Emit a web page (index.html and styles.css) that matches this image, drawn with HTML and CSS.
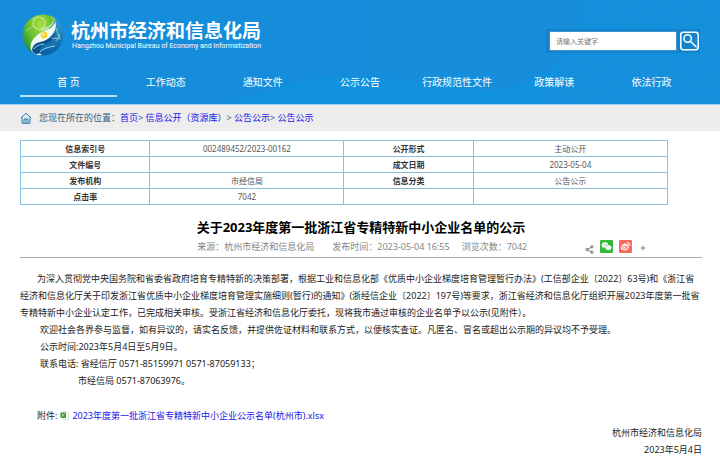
FILE: index.html
```html
<!DOCTYPE html>
<html lang="zh-CN">
<head>
<meta charset="utf-8">
<meta name="viewport" content="width=device-width, initial-scale=1">
<title>杭州市经济和信息化局</title>
<link rel="stylesheet" href="styles.css">
</head>
<body>
<header class="site-header">
  <svg class="waves" viewBox="0 0 720 104" preserveAspectRatio="none" aria-hidden="true">
    <defs>
      <pattern id="lines" width="4" height="4" patternUnits="userSpaceOnUse" patternTransform="rotate(20)">
        <path d="M0 0V4" stroke="#3aa5e8" stroke-width="1" opacity=".16"/>
      </pattern>
    </defs>
    <path d="M230 104Q290 74 360 76Q440 82 490 91Q540 88 570 54Q582 20 586 0H720V104Z" fill="#0c98e4" opacity=".15"/>
    <path d="M360 34Q372 16 374 0H586Q578 40 555 66Q525 88 490 91Q430 82 360 76Z" fill="url(#lines)"/>
    <path d="M230 104Q300 78 360 76Q430 82 490 91Q535 88 566 54L540 104Z" fill="#0d9be8" opacity=".3"/>
    <path d="M566 54Q560 78 540 104H720V0H586Q582 28 566 54Z" fill="url(#lines)"/>
  </svg>
  <div class="brand-row">
    <a class="brand" href="#">
      <svg class="emblem" viewBox="0 0 42 42" aria-hidden="true">
        <defs>
          <radialGradient id="green" cx=".55" cy=".25" r=".8">
            <stop offset="0" stop-color="#a9dd3e"/><stop offset=".5" stop-color="#62bd2d"/><stop offset="1" stop-color="#11804a"/>
          </radialGradient>
          <linearGradient id="blue" x1="0" y1="0" x2="0" y2="1">
            <stop offset="0" stop-color="#3ba6dc"/><stop offset="1" stop-color="#075d9f"/>
          </linearGradient>
          <clipPath id="disc"><circle cx="21" cy="21" r="20.5"/></clipPath>
        </defs>
        <g clip-path="url(#disc)">
          <path d="M0 0H42V42H0Z" fill="url(#blue)"/>
          <path d="M0 0H33Q35 12 20 18Q8 24 9 38L0 42Z" fill="url(#green)"/>
          <path d="M28 1Q38 6 29 14Q19 17 13 23Q7 29 9 36Q13 43 20 41Q12 36 17 30Q29 25 33 16Q36 6 28 1Z" fill="#f4fbef"/>
          <path d="M28 2Q34 7 27 12Q20 14 16 17Q28 16 31 10Q33 5 28 2Z" fill="#c5e8a0"/>
          <path d="M10 36Q11 29 18 28Q28 26 34 18Q32 27 24 30Q17 31 18 39Q12 42 10 36Z" fill="#0a538e"/>
          <path d="M12 35Q14 31 22 30M18 38Q20 34 33 32" fill="none" stroke="#94d5ef" stroke-width="1"/>
          <circle cx="17" cy="9" r="6" fill="none" stroke="#d3efa2" stroke-width="1.2" opacity=".8"/>
          <path d="M4 17L11 12M20 14L24 17M10 4L13 6M29 24L38 25L34 14M34 27L38 20" fill="none" stroke="#b5e8cc" stroke-width=".8" opacity=".8"/>
          <circle cx="22" cy="21" r="3.4" fill="#f6d536"/>
          <circle cx="21" cy="20" r="1.4" fill="#fff4a2"/>
        </g>
      </svg>
      <span class="brand-text">
        <strong class="brand-name">杭州市经济和信息化局</strong>
        <span class="brand-sub">Hangzhou Municipal Bureau of Economy and Informatization</span>
      </span>
    </a>
    <form class="search">
      <input class="search-box" type="text" placeholder="请输入关键字" aria-label="请输入关键字">
      <button class="search-button" type="button" aria-label="搜索">
        <svg viewBox="0 0 19 19" aria-hidden="true"><rect x=".8" y=".8" width="17.4" height="17.4" rx="2.4"/><circle cx="7.6" cy="7" r="3.7"/><path d="M10.4 9.8L16.6 15.8"/></svg>
      </button>
    </form>
  </div>
  <nav class="main-nav">
    <a class="active" href="#">首 页</a>
    <a href="#">工作动态</a>
    <a href="#">通知文件</a>
    <a href="#">公示公告</a>
    <a href="#">行政规范性文件</a>
    <a href="#">政策解读</a>
    <a href="#">依法行政</a>
  </nav>
</header>

<nav class="crumbs">
  <svg class="home" viewBox="0 0 12 12" aria-hidden="true"><path d="M.8 6L6 1.2L11.2 6M2 5V11.3H10V5M4 11V7H8V11M6 7V11"/></svg>
  <span>您现在所在的位置：<a href="#">首页</a>&gt; <a href="#">信息公开（资源库）</a>&gt; <a href="#">公告公示</a>&gt; <a href="#">公告公示</a></span>
</nav>

<main class="page">
  <table class="facts">
    <tbody>
      <tr><th scope="row">信息索引号</th><td>002489452/2023-00162</td><th scope="row">公开形式</th><td>主动公开</td></tr>
      <tr><th scope="row">文件编号</th><td></td><th scope="row">成文日期</th><td>2023-05-04</td></tr>
      <tr><th scope="row">发布机构</th><td>市经信局</td><th scope="row">信息分类</th><td>公告公示</td></tr>
      <tr><th scope="row">点击率</th><td>7042</td><td></td><td></td></tr>
    </tbody>
  </table>

  <article>
    <h1 class="title">关于2023年度第一批浙江省专精特新中小企业名单的公示</h1>
    <div class="meta">
      <span class="source">来源：杭州市经济和信息化局</span>
      <span class="time">发布时间：2023-05-04 16:55</span>
      <span class="views">浏览次数：7042</span>
      <div class="share">
        <svg class="share-mark" viewBox="0 0 9 9" aria-hidden="true"><path d="M2 4.5L6.8 2M2 4.5L6.8 7.2"/><circle cx="1.8" cy="4.5" r="1.2"/><circle cx="7" cy="1.8" r="1.2"/><circle cx="7" cy="7.2" r="1.2"/></svg>
        <button type="button" class="share-button wechat" aria-label="微信">
          <svg viewBox="0 0 13 13" aria-hidden="true">
            <path fill="#fff" d="M5 2.2C3 2.2 1.6 3.4 1.6 5c0 .9.4 1.6 1.1 2.1L2.4 8.3l1.3-.7 1.3.2C7 7.800 8.400 6.500 8.400 5S7 2.200 5 2.200Z"/>
            <path fill="#fff" stroke="#35b93c" stroke-width=".5" d="M8.400 4.900C6.500 4.900 5.100 6.100 5.100 7.600S6.500 10.300 8.400 10.300l1.100-.2 1.300.7-.3-1.200c.8-.5 1.200-1.200 1.200-2C11.700 6.100 10.300 4.900 8.400 4.900Z"/>
            <g fill="#35b93c"><circle cx="3.900" cy="4.300" r=".5"/><circle cx="6.100" cy="4.300" r=".5"/><circle cx="7.400" cy="6.900" r=".4"/><circle cx="9.400" cy="6.900" r=".4"/></g>
          </svg>
        </button>
        <button type="button" class="share-button weibo" aria-label="微博">
          <svg viewBox="0 0 13 13" aria-hidden="true">
            <path fill="#fff" d="M5.600 3.500C6.700 3 7.200 3.700 6.900 4.700C8.200 4.200 9 4.600 8.700 5.700C9.800 6.100 10 6.900 9.500 7.900C8.700 9.700 6.500 10.400 4.500 10.100C2.600 9.800 1.600 8.800 1.900 7.400C2.200 5.800 4.200 4.100 5.600 3.500Z"/>
            <ellipse cx="5.700" cy="7.500" rx="2.700" ry="1.800" fill="#f56b5d"/><circle cx="5.300" cy="7.600" r="1.200" fill="#fff"/>
            <path fill="none" stroke="#fff" stroke-width=".8" stroke-linecap="round" d="M8 2.400Q11.500 2 11.100 5.600M8.200 3.900Q9.900 3.700 9.700 5.300"/>
          </svg>
        </button>
        <button type="button" class="more" aria-label="更多分享"><svg viewBox="0 0 6 6" aria-hidden="true"><path d="M3 .5V5.500M.5 3H5.500"/></svg></button>
      </div>
    </div>

    <div class="body">
      <p class="lead">为深入贯彻党中央国务院和省委省政府培育专精特新的决策部署，根据工业和信息化部《优质中小企业梯度培育管理暂行办法》(工信部企业〔2022〕63号)和《浙江省经济和信息化厅关于印发浙江省优质中小企业梯度培育管理实施细则(暂行)的通知》(浙经信企业〔2022〕197号)等要求，浙江省经济和信息化厅组织开展2023年度第一批省专精特新中小企业认定工作，已完成相关审核。受浙江省经济和信息化厅委托，现将我市通过审核的企业名单予以公示(见附件）。</p>
      <p>欢迎社会各界参与监督，如有异议的，请实名反馈，并提供佐证材料和联系方式，以便核实查证。凡匿名、冒名或超出公示期的异议均不予受理。</p>
      <p>公示时间:2023年5月4日至5月9日。</p>
      <p>联系电话: 省经信厅 0571-85159971 0571-87059133；</p>
      <p class="second-phone">市经信局 0571-87063976。</p>
    </div>

    <p class="attachment">附件:
      <svg class="sheet" viewBox="0 0 9 9" aria-hidden="true"><path d="M3 .5H7L8.500 2V8.500H3Z" fill="#fff" stroke="#c9cdc9" stroke-width=".6"/><path d="M.3 1.500H6V7H.3Z" fill="#4a9a43"/><path d="M1.500 5.700L4.700 2.700M1.700 3L3.300 4.200" stroke="#d9f0d0" stroke-width=".8"/></svg>
      <a href="#">2023年度第一批浙江省专精特新中小企业公示名单(杭州市).xlsx</a></p>

    <footer class="sign">
      <p>杭州市经济和信息化局</p>
      <p>2023年5月4日</p>
    </footer>
  </article>
</main>
</body>
</html>
```

FILE: styles.css
```css
* {
  box-sizing: border-box;
}

body {
  margin: 0;
  background: #fff;
  color: #222;
  font: 9px/17px "Noto Sans", "Noto Sans CJK SC", sans-serif;
}

p,
h1 {
  margin: 0;
}

a {
  color: #1a14e6;
  text-decoration: none;
}

button {
  padding: 0;
  border: 0;
  background: none;
}

svg {
  display: block;
}

/* Header */
.site-header {
  position: relative;
  padding: 13px 20px 7px;
  border-bottom: 1px solid #9bcdee;
  background: #168dda;
  color: #fff;
}

.waves {
  position: absolute;
  inset: 0;
  width: 100%;
  height: 100%;
}

.brand-row {
  position: relative;
  display: flex;
  justify-content: space-between;
  align-items: center;
}

.brand {
  display: flex;
  align-items: center;
  gap: 7px;
  margin-left: 2px;
  color: #fff;
}

.emblem {
  width: 42px;
  height: 44px;
}

.brand-text {
  display: flex;
  flex-direction: column;
}

.brand-name {
  font-size: 19px;
  line-height: 22px;
  font-weight: 700;
}

.brand-sub {
  padding-left: 1px;
  font-family: Roboto, sans-serif;
  font-size: 7px;
  line-height: 8px;
}

.search {
  display: flex;
  gap: 3px;
  margin-top: 12px;
  padding: 2px 1px 2px 3px;
  background: #1483ce;
}

.search-box {
  width: 128px;
  height: 20px;
  padding: 0 6px;
  border: 1px solid #3b93cd;
  background: #fff;
  font: 7px/16px "Noto Sans", "Noto Sans CJK SC", sans-serif;
}

.search-box::placeholder {
  color: #777;
}

.search-button,
.search-button svg {
  width: 19px;
  height: 20px;
}

.search-button svg {
  fill: none;
  stroke: #fff;
  stroke-width: 1.5;
}

.main-nav {
  position: relative;
  display: grid;
  grid-template-columns: repeat(7, 1fr);
  margin-top: 12px;
}

.main-nav a {
  border-bottom: 2px solid transparent;
  color: #fff;
  font-size: 10px;
  line-height: 26px;
  text-align: center;
}

.main-nav .active {
  border-color: #b9e0fa;
}

/* Breadcrumbs */
.crumbs {
  display: flex;
  align-items: center;
  gap: 7px;
  padding: 0 20px;
  background: #ededed;
  color: #35617f;
  line-height: 26px;
}

.home {
  width: 12px;
  height: 12px;
  fill: none;
  stroke: #2b7fae;
  stroke-width: 1;
}

/* Details table */
.page {
  padding: 9px 18px 12px 20px;
}

.facts {
  width: 95%;
  border-collapse: collapse;
  table-layout: fixed;
  font-size: 8px;
  line-height: 14px;
  text-align: center;
}

.facts th,
.facts td {
  width: 30%;
  height: 16px;
  padding: 0;
  border: 1px solid #87bfe0;
  color: #555;
}

.facts th {
  width: 20%;
  color: #333;
}

/* Article */
.title {
  margin-top: 12px;
  color: #000;
  font-size: 13px;
  line-height: 20px;
  text-align: center;
}

.meta {
  display: flex;
  align-items: center;
  padding-left: 26%;
  border-bottom: 1px solid #aaa;
  color: #858585;
  line-height: 20px;
  white-space: nowrap;
}

.time {
  margin-left: 18px;
}

.views {
  margin-left: 12px;
}

.share {
  display: flex;
  align-items: center;
  gap: 6px;
  margin-left: auto;
  padding-right: 56px;
}

.share-mark {
  width: 9px;
  height: 9px;
  margin-top: 4px;
  fill: none;
  stroke: #777;
}

.share-button {
  width: 13px;
  height: 13px;
  margin-bottom: 2px;
  border-radius: 1px;
}

.wechat {
  background: #35b93c;
}

.weibo {
  background: #f56b5d;
}

.more svg {
  width: 6px;
  height: 6px;
  margin: 2px 0 0 2px;
  stroke: #888;
}

.body {
  margin-top: 12px;
}

.body p {
  padding-left: 20px;
}

.body .lead {
  padding-left: 0;
  text-indent: 17px;
}

.body .second-phone {
  padding-left: 58px;
}

.attachment {
  display: flex;
  align-items: center;
  gap: 3px;
  margin-top: 18px;
  padding-left: 17px;
}

.sheet {
  width: 9px;
  height: 9px;
}

.sign {
  text-align: right;
}
```
